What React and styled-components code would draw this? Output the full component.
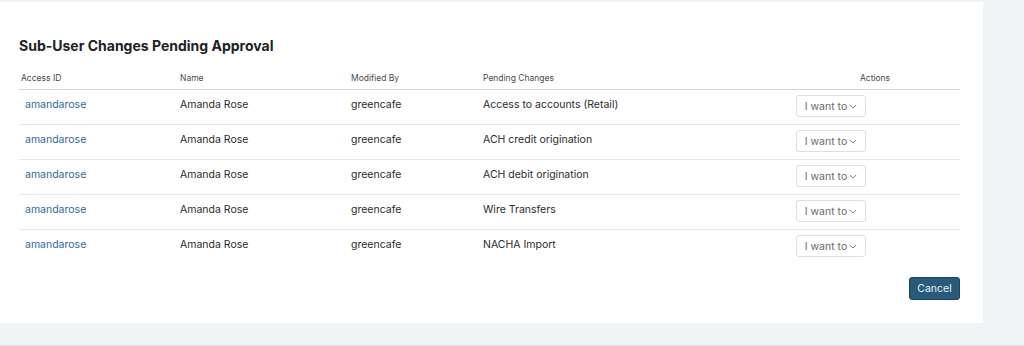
import React from 'react';
import styled, { createGlobalStyle } from 'styled-components';

const GlobalStyle = createGlobalStyle`
  html, body {
    margin: 0;
    padding: 0;
    background: #f1f4f7;
    font-family: Inter, "Noto Sans", "Liberation Sans", sans-serif;
  }
`;

const rows = [
  { id: 'amandarose', name: 'Amanda Rose', by: 'greencafe', change: 'Access to accounts (Retail)' },
  { id: 'amandarose', name: 'Amanda Rose', by: 'greencafe', change: 'ACH credit origination' },
  { id: 'amandarose', name: 'Amanda Rose', by: 'greencafe', change: 'ACH debit origination' },
  { id: 'amandarose', name: 'Amanda Rose', by: 'greencafe', change: 'Wire Transfers' },
  { id: 'amandarose', name: 'Amanda Rose', by: 'greencafe', change: 'NACHA Import' },
];

const App = () => {
  return (
    <>
      <GlobalStyle />
      <Page>
        <Card>
          <Title>Sub-User Changes Pending Approval</Title>
          <Table>
            <HeadRow>
              <HeadCell>Access ID</HeadCell>
              <HeadCell>Name</HeadCell>
              <HeadCell>Modified By</HeadCell>
              <HeadCell>Pending Changes</HeadCell>
              <HeadCell $center>Actions</HeadCell>
            </HeadRow>
            {rows.map((r, i) => (
              <Row key={i} $last={i === rows.length - 1}>
                <Cell>
                  <IdLink href="#">{r.id}</IdLink>
                </Cell>
                <Cell>{r.name}</Cell>
                <Cell>{r.by}</Cell>
                <Cell>{r.change}</Cell>
                <ActionCell>
                  <Select>
                    I want to
                    <Chevron viewBox="0 0 10 6">
                      <path d="M1 1l4 4 4-4" />
                    </Chevron>
                  </Select>
                </ActionCell>
              </Row>
            ))}
          </Table>
          <Footer>
            <CancelButton>Cancel</CancelButton>
          </Footer>
        </Card>
        <BottomLine />
      </Page>
    </>
  );
};

export default App;

const Page = styled.div`
  width: 1024px;
  height: 346px;
  padding-top: 2px;
  box-sizing: border-box;
  display: flex;
  flex-direction: column;
`;

const Card = styled.div`
  width: 983px;
  height: 321px;
  background: #ffffff;
  box-sizing: border-box;
  padding: 35px 23px 0 19px;
  display: flex;
  flex-direction: column;
`;

const BottomLine = styled.div`
  margin-top: auto;
  height: 1px;
  background: #d9dee3;
`;

const Title = styled.h2`
  margin: 0;
  font-size: 14px;
  line-height: 18px;
  font-weight: 700;
  color: #222;
`;

const Table = styled.div`
  margin-top: 12px;
  display: flex;
  flex-direction: column;
`;

const grid = `
  display: grid;
  grid-template-columns: 159px 171px 132px 309px 1fr;
  align-items: center;
`;

const HeadRow = styled.div`
  ${grid}
  height: 22px;
  border-bottom: 1px solid #c9d6df;
`;

const HeadCell = styled.div`
  padding-left: ${(p) => (p.$center ? '0' : '2px')};
  padding-bottom: 1px;
  text-align: ${(p) => (p.$center ? 'center' : 'left')};
  font-size: 8.5px;
  color: #4a4a4a;
`;

const Row = styled.div`
  ${grid}
  height: 34px;
  border-bottom: 1px solid ${(p) => (p.$last ? 'transparent' : '#e3e8ec')};
`;

const Cell = styled.div`
  padding-left: 2px;
  font-size: 10.5px;
  color: #2b2b2b;
  padding-bottom: 6px;
`;

const IdLink = styled.a`
  padding-left: 4px;
  color: #2f6b9a;
  text-decoration: none;
`;

const ActionCell = styled.div`
  padding-left: 6px;
  padding-bottom: 2px;
  display: flex;
  align-items: center;
`;

const Select = styled.div`
  width: 70px;
  height: 22px;
  box-sizing: border-box;
  border: 1px solid #dcdfe2;
  border-radius: 3px;
  display: flex;
  align-items: center;
  justify-content: center;
  gap: 2px;
  font-size: 10.5px;
  color: #6b6b6b;
  background: #fff;
`;

const Chevron = styled.svg`
  width: 8px;
  height: 5px;
  margin-top: 1px;
  fill: none;
  stroke: #7a7a7a;
  stroke-width: 1.2;
`;

const Footer = styled.div`
  margin-top: 12px;
  display: flex;
  justify-content: flex-end;
`;

const CancelButton = styled.button`
  width: 51px;
  height: 23px;
  padding: 0;
  background: #2a5a7b;
  border: 1px solid #1d4661;
  border-radius: 3px;
  color: #e8eef3;
  font-family: Inter, "Noto Sans", sans-serif;
  font-size: 10.5px;
  cursor: pointer;
`;
